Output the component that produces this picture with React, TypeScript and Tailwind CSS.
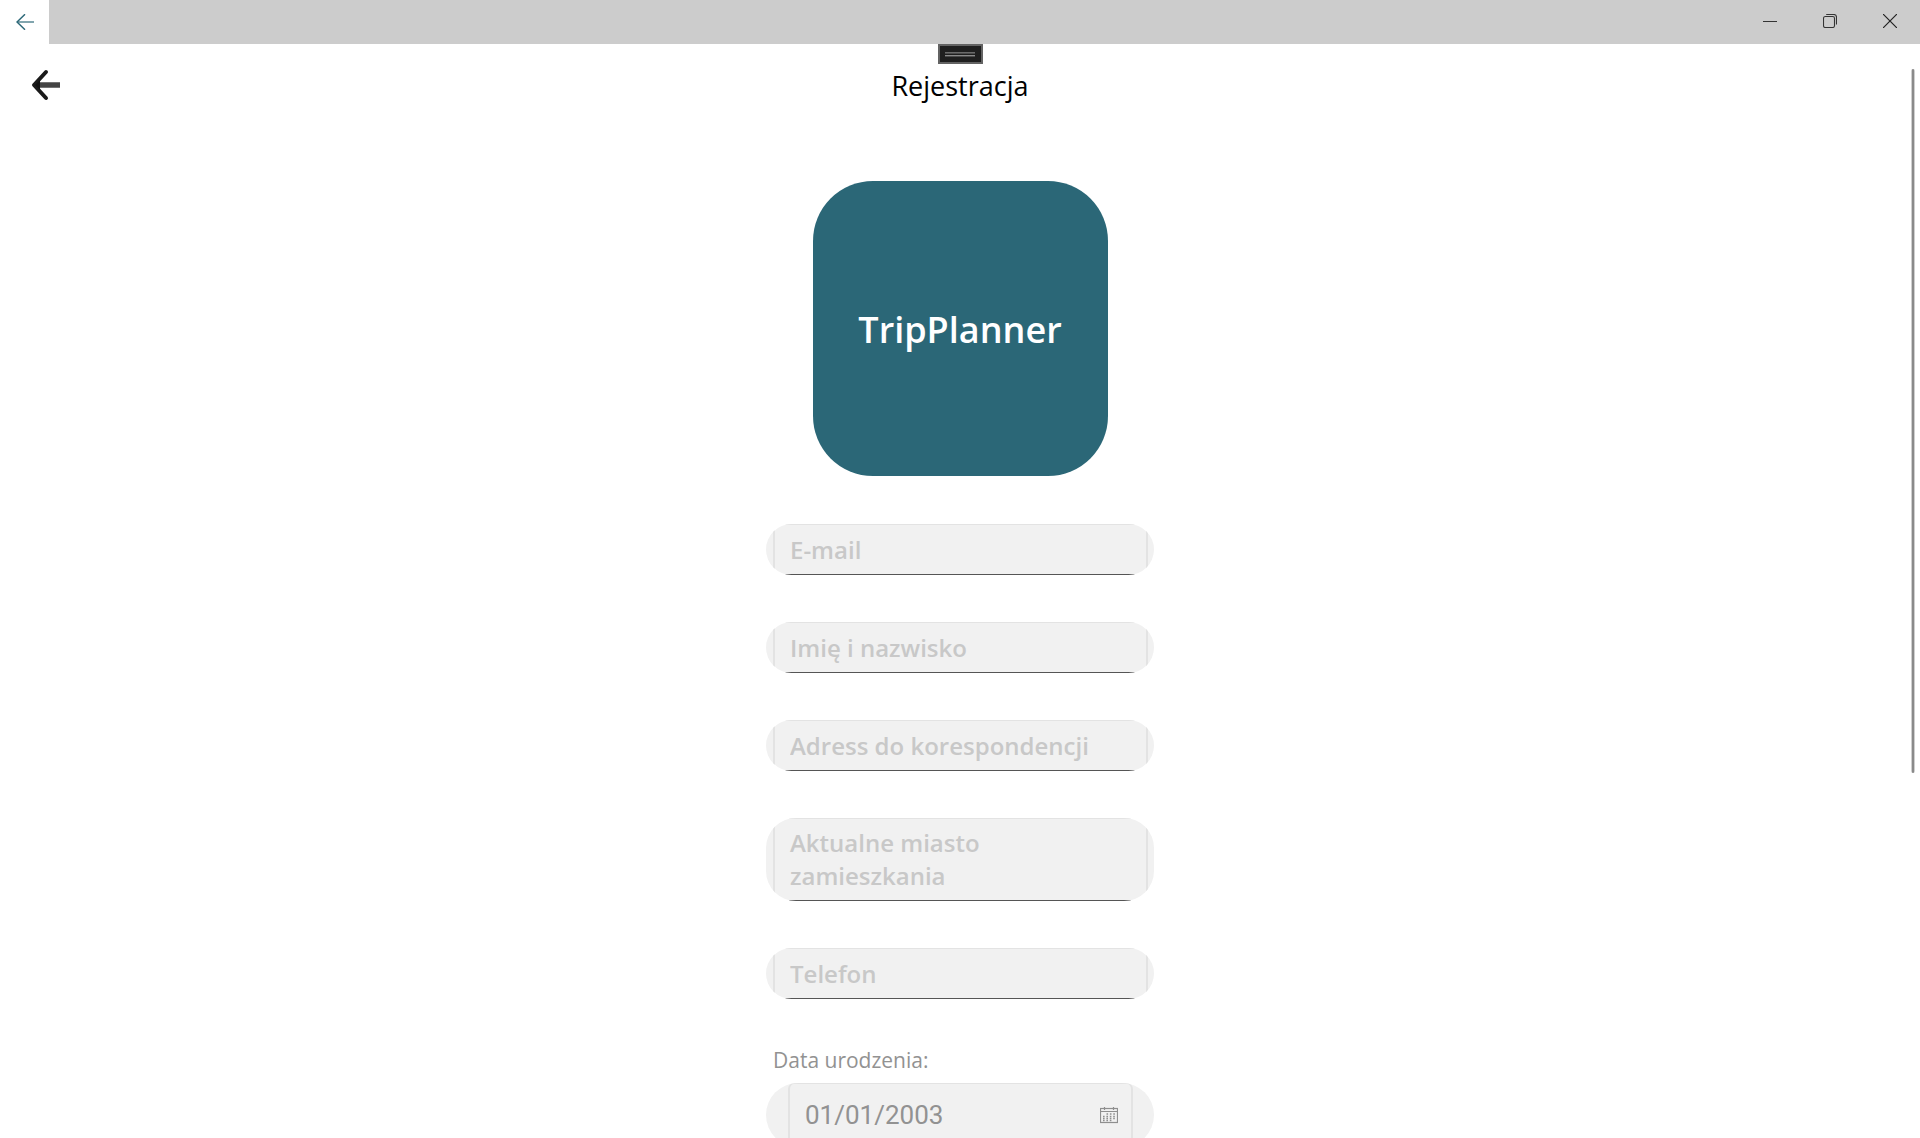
import React from "react";

function TitleBar() {
  return (
    <header className="relative flex h-11 shrink-0 items-stretch justify-between bg-[#cccccc]">
      <button aria-label="Wstecz" className="flex w-[49px] items-center justify-center bg-white">
        <svg width="18" height="16" viewBox="0 0 18 16" fill="none" stroke="#2b6777">
          <path d="M18 8H1" strokeWidth="1.4" opacity="0.85" />
          <path d="M9 0.3L1 8L9 15.7" strokeWidth="1.5" />
        </svg>
      </button>
      <div className="flex">
        <button aria-label="Minimalizuj" className="flex w-15 items-center justify-center pb-0.5">
          <svg width="14" height="14" viewBox="0 0 14 14" stroke="#333" strokeWidth="1">
            <path d="M0 7.5H14" />
          </svg>
        </button>
        <button aria-label="Przywróć" className="flex w-15 items-center justify-center pb-0.5">
          <svg width="14" height="14" viewBox="0 0 14 14" fill="none" stroke="#333" strokeWidth="1.1">
            <rect x="0.5" y="2.5" width="11" height="11" rx="1.8" />
            <path d="M3.2 0.5H10.8A2.7 2.7 0 0 1 13.5 3.2V10.6" />
          </svg>
        </button>
        <button aria-label="Zamknij" className="flex w-15 items-center justify-center pb-0.5">
          <svg width="14" height="14" viewBox="0 0 14 14" stroke="#222" strokeWidth="1.2">
            <path d="M0 0L14 14M14 0L0 14" />
          </svg>
        </button>
      </div>
      <div className="absolute inset-x-0 top-full flex justify-center">
        <div className="flex h-5 w-[45px] flex-col items-center justify-center gap-px border-2 border-[#636363] bg-[#1f1f1f]">
          <div className="h-0.5 w-[30px] border-t border-[#6a6a6a] bg-[#4a4a4a]" />
          <div className="h-0.5 w-[30px] border-t border-[#8a8a8a] bg-[#4a4a4a]" />
        </div>
      </div>
    </header>
  );
}

const fieldText =
  "block w-full resize-none overflow-hidden bg-transparent px-[15px] text-2xl leading-[33px] font-semibold text-[#555] outline-none placeholder:text-[#c8c8c8] placeholder:opacity-100";

function Field({ label, type = "text" }: { label: string; type?: string }) {
  return (
    <div className="overflow-hidden rounded-[26px] bg-[#f1f1f1] pr-1.5 pl-[7px]">
      <div className="border-x-2 border-t border-b border-x-[#e3e3e3] border-t-[#e3e3e3] border-b-[#555555]">
        <input type={type} aria-label={label} placeholder={label} className={`${fieldText} h-[49px]`} />
      </div>
    </div>
  );
}

function TallField({ label }: { label: string }) {
  return (
    <div className="overflow-hidden rounded-[30px] bg-[#f1f1f1] pr-1.5 pl-[7px]">
      <div className="border-x-2 border-t border-b border-x-[#e3e3e3] border-t-[#e3e3e3] border-b-[#555555]">
        <textarea rows={2} aria-label={label} placeholder={label} className={`${fieldText} h-[81px] pt-[7px] pr-25`} />
      </div>
    </div>
  );
}

function CalendarIcon() {
  return (
    <svg width="18" height="18" viewBox="0 0 18 18" fill="none" stroke="#8f8f8f">
      <rect x="0.5" y="2.5" width="17" height="14" strokeWidth="1.2" />
      <path d="M1 5.5H17M4.5 1V4M13.5 1V4" strokeWidth="1.2" />
      <path d="M6.5 8H15.500M3 10.500H15.500M3 12.500H15.500M3 14.500H12.500" strokeWidth="1.3" strokeDasharray="1.6 1.8" />
    </svg>
  );
}

export default function App() {
  return (
    <div className="flex h-screen flex-col overflow-hidden bg-white font-['Open_Sans',sans-serif]">
      <TitleBar />
      <main className="relative min-h-0 flex-1 overflow-hidden">
        <div className="grid grid-cols-[60px_1fr_60px] items-center pt-6">
          <button aria-label="Powrót" className="flex justify-end pb-0.5">
            <svg width="29" height="34" viewBox="0 0 29 34" fill="none">
              <path d="M5 17H29" stroke="#444" strokeWidth="5.5" />
              <path d="M15 4L3 17L15 30" stroke="#1a1a1a" strokeWidth="4" strokeLinecap="round" strokeLinejoin="round" />
              <path d="M4 17L9 12V22Z" fill="#111" />
            </svg>
          </button>
          <h1 className="text-center text-[27px] leading-9 text-black">Rejestracja</h1>
        </div>

        <div className="mx-auto flex w-[388px] flex-col">
          <div className="mt-[77px] flex size-[295px] items-center justify-center self-center rounded-[60px] bg-[#2b6777] pt-0.5 text-4xl font-semibold text-white">
            TripPlanner
          </div>

          <form className="mt-12 flex flex-col gap-[47px]">
            <Field label="E-mail" type="email" />
            <Field label="Imię i nazwisko" />
            <Field label="Adress do korespondencji" />
            <TallField label="Aktualne miasto zamieszkania" />
            <Field label="Telefon" type="tel" />

            <div>
              <label htmlFor="birth" className="block px-[7px] pb-[9px] text-[21px] leading-7 text-[#929292]">
                Data urodzenia:
              </label>
              <div className="overflow-hidden rounded-[32px] bg-[#f1f1f1] pr-[21px] pl-[22px]">
                <div className="flex h-16 items-center rounded-md border-2 border-t border-[#e3e3e3] pr-[13px] pl-[15px]">
                  <input
                    id="birth"
                    type="text"
                    defaultValue="01/01/2003"
                    className="min-w-0 flex-1 bg-transparent font-[Roboto,sans-serif] text-[26px] leading-8 text-[#929292] outline-none"
                  />
                  <button type="button" aria-label="Wybierz datę">
                    <CalendarIcon />
                  </button>
                </div>
              </div>
            </div>
          </form>
        </div>

        <div className="absolute top-[25px] right-[5px] h-[704px] w-1 rounded-full bg-[#cfcfcf]">
          <div className="mx-auto h-full w-0.5 rounded-full bg-[#8a8a8a]" />
        </div>
      </main>
    </div>
  );
}
